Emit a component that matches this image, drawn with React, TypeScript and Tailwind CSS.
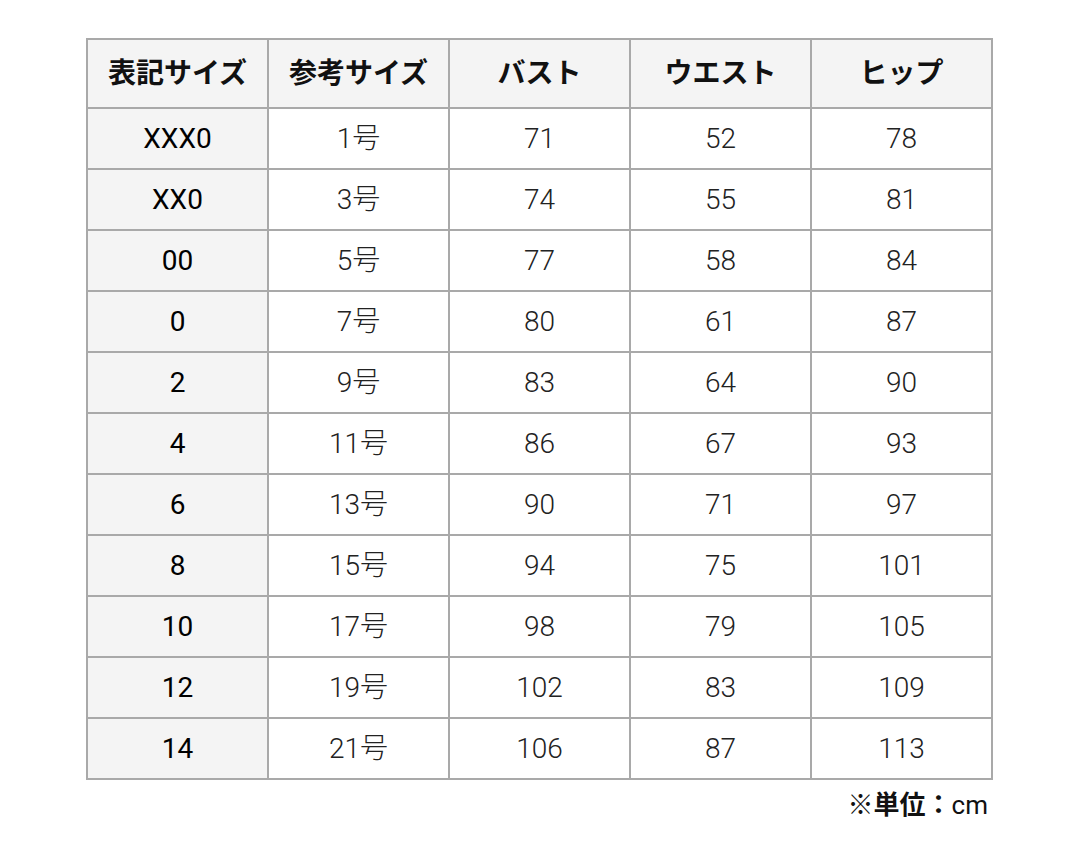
import React from "react";

const rows: [string, string, number, number, number][] = [
  ["XXX0", "1号", 71, 52, 78],
  ["XX0", "3号", 74, 55, 81],
  ["00", "5号", 77, 58, 84],
  ["0", "7号", 80, 61, 87],
  ["2", "9号", 83, 64, 90],
  ["4", "11号", 86, 67, 93],
  ["6", "13号", 90, 71, 97],
  ["8", "15号", 94, 75, 101],
  ["10", "17号", 98, 79, 105],
  ["12", "19号", 102, 83, 109],
  ["14", "21号", 106, 87, 113],
];

const headers = ["表記サイズ", "参考サイズ", "バスト", "ウエスト", "ヒップ"];

export default function App() {
  return (
    <div
      className="min-h-[848px] bg-white pl-[86px] pt-[38px] text-[#1a1a1a]"
      style={{ fontFamily: 'Roboto, "Noto Sans CJK JP", sans-serif' }}
    >
      <div className="w-[908px]">
        <table className="border-collapse text-[28px] leading-none">
          <thead>
            <tr className="h-[69px] bg-[#f4f4f4]">
              {headers.map((h) => (
                <th
                  key={h}
                  className="w-[181px] border-2 border-[#a9a9a9] p-0 text-center font-bold text-[#111]"
                >
                  {h}
                </th>
              ))}
            </tr>
          </thead>
          <tbody>
            {rows.map((r) => (
              <tr key={r[0]} className="h-[61px]">
                <td className="border-2 border-[#a9a9a9] bg-[#f4f4f4] p-0 text-center font-normal text-[#000]">
                  {r[0]}
                </td>
                <td className="border-2 border-[#a9a9a9] p-0 text-center font-light text-[#222]">
                  {r[1]}
                </td>
                <td className="border-2 border-[#a9a9a9] p-0 text-center font-light text-[#222]">
                  {r[2]}
                </td>
                <td className="border-2 border-[#a9a9a9] p-0 text-center font-light text-[#222]">
                  {r[3]}
                </td>
                <td className="border-2 border-[#a9a9a9] p-0 text-center font-light text-[#222]">
                  {r[4]}
                </td>
              </tr>
            ))}
          </tbody>
        </table>
        <div className="mt-[12px] flex justify-end pr-[6px] text-[26px] leading-none">
          <span className="font-bold text-[#111]">※単位：</span>
          <span className="font-normal text-[#111]">cm</span>
        </div>
      </div>
    </div>
  );
}
